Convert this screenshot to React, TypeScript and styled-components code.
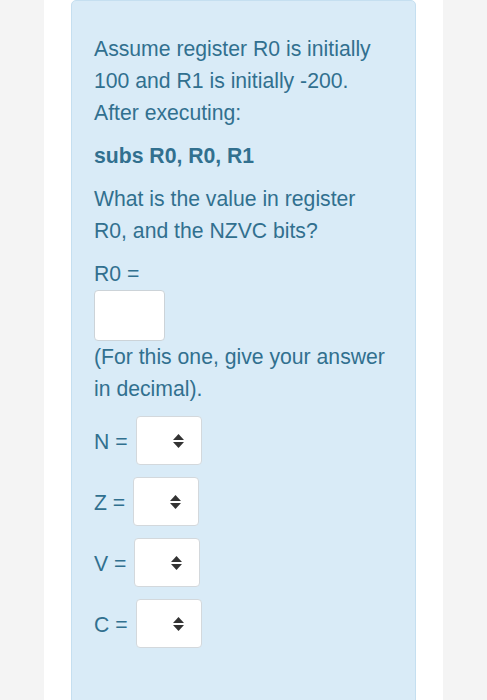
import React from "react";
import styled, { createGlobalStyle } from "styled-components";

const GlobalStyle = createGlobalStyle`
  html, body {
    margin: 0;
    padding: 0;
    background: #f4f4f4;
  }
  body {
    font-family: "Liberation Sans", Arial, Helvetica, sans-serif;
  }
`;

const flags = ["N", "Z", "V", "C"];

export default function App() {
  return (
    <Page>
      <GlobalStyle />
      <Column>
        <Card>
          <Para>
            Assume register R0 is initially
            <br />
            100 and R1 is initially -200.
            <br />
            After executing:
          </Para>
          <Code>subs R0, R0, R1</Code>
          <Para>
            What is the value in register
            <br />
            R0, and the NZVC bits?
          </Para>
          <Line>R0 =</Line>
          <AnswerInput type="text" />
          <Para>
            (For this one, give your answer
            <br />
            in decimal).
          </Para>
          {flags.map((f) => (
            <FlagRow key={f}>
              <Label>{f} =</Label>
              <SelectBox>
                <Arrows />
              </SelectBox>
            </FlagRow>
          ))}
        </Card>
      </Column>
    </Page>
  );
}

function Arrows() {
  return (
    <svg width="11" height="14" viewBox="0 0 11 14">
      <path d="M5.5 0 L11 6 L0 6 Z" fill="#333" />
      <path d="M5.5 14 L11 8 L0 8 Z" fill="#333" />
    </svg>
  );
}

const Page = styled.div`
  min-height: 700px;
  background: #f4f4f4;
`;

const Column = styled.div`
  margin-left: 44px;
  width: 399px;
  min-height: 700px;
  background: #ffffff;
  padding: 0 27px;
  box-sizing: border-box;
`;

const Card = styled.div`
  width: 345px;
  min-height: 720px;
  box-sizing: border-box;
  background: #d9ebf7;
  border: 1px solid #c5dff0;
  border-radius: 5px;
  padding: 32px 22px 0 22px;
  color: #31708f;
  font-size: 21.2px;
  line-height: 32px;
`;

const Para = styled.p`
  margin: 0 0 11px;
`;

const Code = styled.p`
  margin: 0 0 11px;
  font-weight: bold;
`;

const Line = styled.div``;

const AnswerInput = styled.input`
  display: block;
  width: 71px;
  height: 51px;
  box-sizing: border-box;
  border: 1px solid #ccd3d8;
  border-radius: 4px;
  background: #fff;
  margin: 0;
  padding: 0;
`;

const FlagRow = styled.div`
  display: flex;
  align-items: center;
  gap: 8px;
  margin-bottom: 12px;
`;

const Label = styled.span`
  line-height: 24px;
  padding-top: 2px;
`;

const SelectBox = styled.div`
  width: 66px;
  height: 49px;
  box-sizing: border-box;
  border: 1px solid #d3d8dc;
  border-radius: 4px;
  background: #fff;
  display: flex;
  align-items: center;
  padding-left: 36px;
`;
